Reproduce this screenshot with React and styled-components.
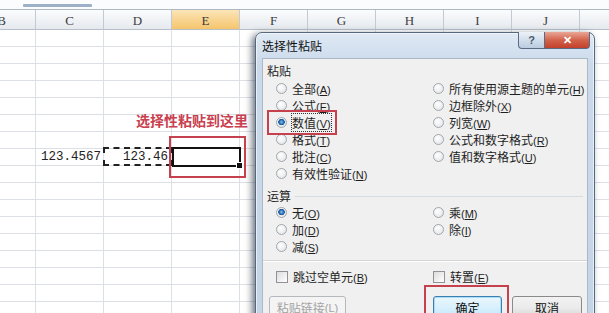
import React from 'react';
import styled, { createGlobalStyle, css } from 'styled-components';

const GlobalStyle = createGlobalStyle`
  html, body { margin: 0; padding: 0; background: #fff; overflow: hidden; }
  body { width: 609px; height: 313px; font-family: "Noto Sans CJK SC", "Noto Sans", sans-serif; }
  #root { width: 609px; height: 313px; }
`;

const Screen = styled.div`
  position: relative;
  width: 609px;
  height: 313px;
  overflow: hidden;
  background: #fff;
`;

const TopStrip = styled.div`
  height: 9px;
  border-bottom: 1px solid #aeb8c3;
  background: #fbfcfd;
  padding-left: 23px;
  display: flex;
  align-items: center;
`;

const ScrollTab = styled.div`
  width: 69px;
  height: 3px;
  margin-top: 1px;
  background: #9cb1c7;
  border-radius: 1px;
`;

const Sheet = styled.div`
  display: grid;
  grid-template-columns: repeat(10, 68px);
  grid-template-rows: 20px;
  grid-auto-rows: 17px;
  margin-left: -32px;
`;

const HeaderCell = styled.div`
  box-sizing: border-box;
  border-right: 1px solid #c3cad3;
  border-bottom: 1px solid #b6bfca;
  background: ${p => (p.$active ? 'linear-gradient(#fbe5b8, #f5c56d)' : 'linear-gradient(#fbfcfd, #e5e9ee)')};
  display: flex;
  align-items: center;
  justify-content: center;
  padding-top: 3px;
  font: 13px "Liberation Serif", serif;
  color: #3b3b3b;
`;

const Cell = styled.div`
  position: relative;
  box-sizing: border-box;
  border-right: 1px solid #dcdfe4;
  border-bottom: 1px solid #dcdfe4;
  display: flex;
  align-items: center;
  justify-content: flex-end;
  padding-right: 2px;
  white-space: nowrap;
  font: 12.5px "Liberation Mono", monospace;
  color: #222;
  ${p => p.$marquee && css`
    padding-right: 3px;
    &::before {
      content: "";
      position: absolute;
      left: -1px; top: -2px; right: -1px; bottom: -1px;
      border: 2px dashed #222;
    }
  `}
  ${p => p.$selected && css`
    &::after {
      content: "";
      position: absolute;
      left: 0; top: -2px; right: -2px; bottom: -2px;
      border: 2px solid #111;
    }
    &::before {
      content: "";
      position: absolute;
      right: -4px; bottom: -4px;
      width: 5px; height: 5px;
      background: #111;
      border: 1px solid #fff;
      z-index: 1;
    }
  `}
`;

const Annotation = styled.div`
  position: absolute;
  left: 136px;
  top: 112px;
  font: bold 14px/16px "Noto Sans CJK SC", sans-serif;
  color: #c9404f;
  letter-spacing: 0;
`;

const RedBox = styled.div`
  position: absolute;
  box-sizing: border-box;
  border: 2px solid #c7404e;
  z-index: 5;
`;

const Dialog = styled.div`
  position: absolute;
  left: 255px;
  top: 32px;
  width: 340px;
  height: 300px;
  box-sizing: border-box;
  border: 1px solid #56687e;
  border-radius: 7px 7px 0 0;
  background: linear-gradient(#dfe9f5, #cbdaeb 30px, #c4d4e7);
  box-shadow: -3px 2px 7px rgba(20, 30, 45, 0.6), inset 0 0 0 1px rgba(255,255,255,0.6);
  display: flex;
  flex-direction: column;
  padding: 0 6px;
`;

const TitleBar = styled.div`
  height: 25px;
  display: flex;
  align-items: flex-start;
`;

const Title = styled.div`
  font-size: 12px;
  line-height: 25px;
  color: #111;
`;

const CaptionButtons = styled.div`
  margin-left: auto;
  margin-right: -2px;
  margin-top: -1px;
  display: flex;
`;

const CaptionButton = styled.div`
  height: 17px;
  box-sizing: border-box;
  display: flex;
  align-items: center;
  justify-content: center;
  font: bold 11px "Liberation Sans", sans-serif;
  border: 1px solid #5a6c84;
  border-top: none;
  ${p => (p.$close
    ? css`
      width: 45px;
      border-left: none;
      border-radius: 0 0 4px 0;
      background: linear-gradient(#e9a697, #d3634c 50%, #c2402b);
      color: #fff;
    `
    : css`
      width: 27px;
      border-radius: 0 0 0 4px;
      background: linear-gradient(#edf2f8, #d2deeb 50%, #bccce0);
      color: #4a5a70;
    `)}
`;

const Panel = styled.div`
  flex: 1;
  background: #f0f0f0;
  border: 1px solid #aab8c8;
  display: flex;
  flex-direction: column;
  font-size: 12px;
  color: #1e1e1e;
`;

const GroupLabel = styled.div`
  height: ${p => p.$h || 20}px;
  margin-top: ${p => p.$mt || 0}px;
  padding-left: 4px;
  display: flex;
  align-items: center;
  gap: 4px;
  ${p => p.$rule && css`
    &::after {
      content: "";
      flex: 1;
      height: 1px;
      margin: 2px 4px 0 0;
      background: #d5dbe1;
    }
  `}
`;

const OptionGrid = styled.div`
  display: grid;
  grid-template-columns: 157px 157px;
  grid-auto-rows: 17px;
  grid-auto-flow: column;
  grid-template-rows: repeat(${p => p.$rows}, 17px);
  padding-left: 13px;
  margin-top: ${p => p.$mt || 0}px;
`;

const Option = styled.div`
  display: flex;
  align-items: center;
  gap: 5px;
  white-space: nowrap;
`;

const Radio = styled.span`
  width: 11px;
  height: 11px;
  flex: none;
  box-sizing: border-box;
  border-radius: 50%;
  border: 1px solid #a2a6ab;
  background: ${p => (p.$checked
    ? 'radial-gradient(circle at 50% 45%, #8fc3f0 0, #2c72b8 2px, #1a5797 3px, transparent 3.5px), radial-gradient(circle at 40% 35%, #ffffff, #dde1e5)'
    : 'radial-gradient(circle at 40% 35%, #ffffff, #dde1e5)')};
`;

const Check = styled.span`
  width: 12px;
  height: 12px;
  flex: none;
  box-sizing: border-box;
  border: 1px solid #8f9398;
  background: linear-gradient(135deg, #dcdcdc, #ffffff);
`;

const Label = styled.span`
  ${p => p.$focus && css`
    outline: 1px dotted #333;
    outline-offset: 0;
  `}
`;

const Key = styled.span`
  font-family: "Liberation Sans", sans-serif;
  font-size: 11px;
  u { text-decoration: underline; }
`;

const Separator = styled.div`
  margin-top: 5px;
  height: 1px;
  background: #d4d4d4;
  border-bottom: 1px solid #fff;
`;

const ButtonRow = styled.div`
  display: flex;
  margin-top: 11px;
  padding: 0 5px 0 6px;
`;

const RightButtons = styled.div`
  margin-left: auto;
  display: flex;
  gap: 10px;
`;

const Button = styled.div`
  height: 23px;
  width: ${p => p.$w}px;
  box-sizing: border-box;
  border-radius: 3px;
  display: flex;
  align-items: center;
  justify-content: center;
  font-size: 12px;
  ${p => p.$disabled && css`
    border: 1px solid #b5b9bd;
    background: #f4f4f4;
    color: #a3a3a3;
  `}
  ${p => p.$default && css`
    border: 1px solid #3c7fb1;
    background: linear-gradient(#eaf6fd, #d9f0fc 50%, #bee6fd);
    color: #111;
    box-shadow: inset 0 0 0 1px #a8dcf7;
  `}
  ${p => !p.$disabled && !p.$default && css`
    border: 1px solid #8a8a8a;
    background: linear-gradient(#f2f2f2, #ebebeb 50%, #d6d6d6);
    color: #111;
  `}
`;

const cols = ['B', 'C', 'D', 'E', 'F', 'G', 'H', 'I', 'J', 'K'];
const ROWS = 17;

function Opt({ text, k, checked, focus, box }) {
  return (
    <Option>
      {box ? <Check /> : <Radio $checked={checked} />}
      <Label $focus={focus}>
        {text}
        <Key>(<u>{k}</u>)</Key>
      </Label>
    </Option>
  );
}

export default function App() {
  return (
    <Screen>
      <GlobalStyle />
      <TopStrip>
        <ScrollTab />
      </TopStrip>
      <Sheet>
        {cols.map(c => (
          <HeaderCell key={c} $active={c === 'E'}>{c}</HeaderCell>
        ))}
        {Array.from({ length: ROWS }).map((_, r) =>
          cols.map(c => {
            const valueRow = r === 7;
            return (
              <Cell
                key={`${r}-${c}`}
                $marquee={valueRow && c === 'D'}
                $selected={valueRow && c === 'E'}
              >
                {valueRow && c === 'C' ? '123.4567' : null}
                {valueRow && c === 'D' ? '123.46' : null}
              </Cell>
            );
          })
        )}
      </Sheet>

      <Annotation>选择性粘贴到这里</Annotation>
      <RedBox style={{ left: 169, top: 136, width: 77, height: 42 }} />

      <Dialog>
        <TitleBar>
          <Title>选择性粘贴</Title>
          <CaptionButtons>
            <CaptionButton>?</CaptionButton>
            <CaptionButton $close>✕</CaptionButton>
          </CaptionButtons>
        </TitleBar>
        <Panel>
          <GroupLabel $mt={1}>粘贴</GroupLabel>
          <OptionGrid $rows={6}>
            <Opt text="全部" k="A" />
            <Opt text="公式" k="F" />
            <Opt text="数值" k="V" checked focus />
            <Opt text="格式" k="T" />
            <Opt text="批注" k="C" />
            <Opt text="有效性验证" k="N" />
            <Opt text="所有使用源主题的单元" k="H" />
            <Opt text="边框除外" k="X" />
            <Opt text="列宽" k="W" />
            <Opt text="公式和数字格式" k="R" />
            <Opt text="值和数字格式" k="U" />
          </OptionGrid>
          <GroupLabel $mt={4} $h={18} $rule>运算</GroupLabel>
          <OptionGrid $rows={3}>
            <Opt text="无" k="O" checked />
            <Opt text="加" k="D" />
            <Opt text="减" k="S" />
            <Opt text="乘" k="M" />
            <Opt text="除" k="I" />
          </OptionGrid>
          <Separator />
          <OptionGrid $rows={1} $mt={6}>
            <Opt text="跳过空单元" k="B" box />
            <Opt text="转置" k="E" box />
          </OptionGrid>
          <ButtonRow>
            <Button $w={77} $disabled>粘贴链接<Key>(<u>L</u>)</Key></Button>
            <RightButtons>
              <Button $w={69} $default>确定</Button>
              <Button $w={70}>取消</Button>
            </RightButtons>
          </ButtonRow>
        </Panel>
      </Dialog>

      <RedBox style={{ left: 267, top: 110, width: 70, height: 25 }} />
      <RedBox style={{ left: 424, top: 285, width: 85, height: 40 }} />
    </Screen>
  );
}
